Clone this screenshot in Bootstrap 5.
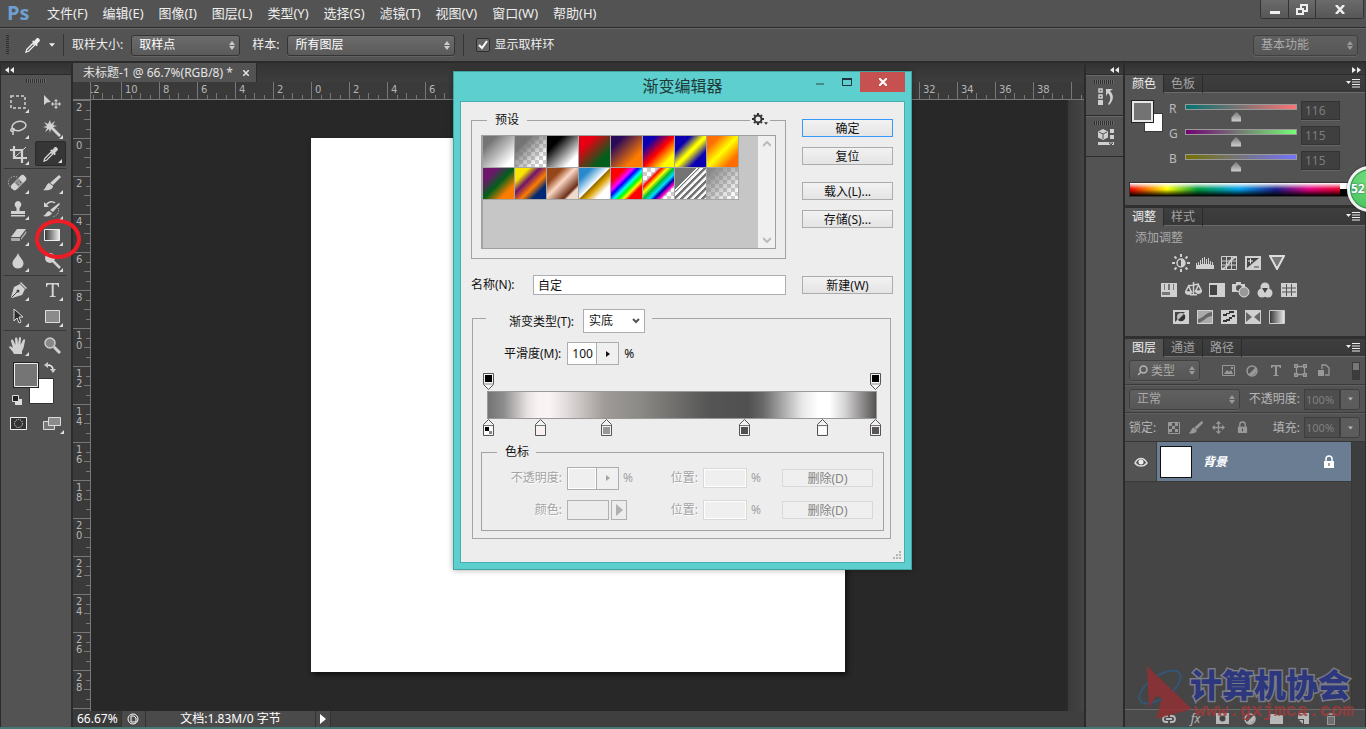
<!DOCTYPE html>
<html lang="zh-CN">
<head>
<meta charset="utf-8">
<meta name="viewport" content="width=device-width, initial-scale=1">
<title>Photoshop - 渐变编辑器</title>
<link rel="stylesheet" href="https://cdn.jsdelivr.net/npm/bootstrap@5.3.0/dist/css/bootstrap.min.css">
<style>
:root{--ps:#535353;--edge:#2b2b2b;--lite:#686868;--ui:"Noto Sans","Noto Sans CJK SC",sans-serif}
body{font:12px/16px var(--ui);color:#eee;background:var(--ps);height:100vh;overflow:hidden}
button,input,select{font:inherit;color:inherit;margin:0}
button{border:0;background:none;padding:0}
a{color:inherit;text-decoration:none}
svg{display:block;fill:currentColor;stroke:none}
.ln{fill:none;stroke:currentColor}
.fit-h{min-height:0}.fit-w{min-width:0}
.menu-bar{height:28px;padding-left:7px;border-bottom:1px solid var(--edge);flex:none}
.logo-ps{font:bold 20px/26px "Open Sans",sans-serif;color:#6f9fd0;width:40px}
.menu-bar a{font-size:13px;line-height:26px;margin-right:15px}
.win-btns{border:1px solid #333;border-top:0;border-radius:0 0 3px 3px;height:19px;margin-right:2px}
.win-btns button{width:27px;height:18px;background:linear-gradient(#6b6b6b,#565656);display:grid;place-items:center}
.win-btns button+button{border-left:1px solid #333}
.win-btns button:last-child{width:48px}
.opt-bar{height:35px;border-top:1px solid var(--lite);border-bottom:2px solid var(--edge);padding:0 8px 0 6px;flex:none}
.vgrip{width:3px;height:20px;background:repeating-linear-gradient(#2f2f2f 0 1px,#535353 1px 2px)}
.hgrip{width:20px;height:4px;background:repeating-linear-gradient(90deg,#2f2f2f 0 1px,#6a6a6a 1px 2px)}
.vline{width:1px;height:22px;background:#353535}
.psel{appearance:none;height:21px;line-height:18px;border:1px solid #343434;border-radius:3px;padding:0 18px 0 7px;color:#fff;
 background:url("data:image/svg+xml,%3Csvg xmlns='http://www.w3.org/2000/svg' width='6' height='9'%3E%3Cpath d='M3 0l3 4H0zM3 9l3-4H0z' fill='%23ccc'/%3E%3C/svg%3E") right 4px center no-repeat,linear-gradient(#6c6c6c,#5a5a5a);box-shadow:0 1px #636363}
.psel.dim{color:#aaa;border-color:#404040;background-color:#5a5a5a;background-image:url("data:image/svg+xml,%3Csvg xmlns='http://www.w3.org/2000/svg' width='6' height='9'%3E%3Cpath d='M3 0l3 4H0zM3 9l3-4H0z' fill='%23999'/%3E%3C/svg%3E"),linear-gradient(#606060,#565656)}
.w-110{width:109px}.w-168{width:168px}.w-105{width:105px}.w-mode{width:111px}
.psel.w-kind{width:71px;padding-left:21px}
.tick{appearance:none;width:14px;height:14px;border:1px solid #2d2d2d;border-radius:2px;background:url("data:image/svg+xml,%3Csvg xmlns='http://www.w3.org/2000/svg' width='12' height='12'%3E%3Cpath d='M2 6l3 3L10 2' fill='none' stroke='%23fff' stroke-width='2'/%3E%3C/svg%3E") center no-repeat,#666}
.strip{height:12px;background:linear-gradient(#323232,#3c3c3c);border-bottom:1px solid var(--edge);flex:none}
/* tool box */
.tools{width:73px;border-left:1px solid var(--edge);border-right:2px solid var(--edge)}
.tool-grid{display:grid;grid-template-columns:34px 34px;padding-top:6px}
.tool{height:26px;position:relative;display:grid;place-items:center;color:#d2d2d2}
.tool.more::after{content:"";position:absolute;right:6px;bottom:2px;border:2px solid transparent;border-right-color:#ddd;border-bottom-color:#ddd}
.tool.on{background:#363636;border:1px solid #2a2a2a;border-radius:2px;margin-right:3px;margin-bottom:1px;height:25px}
.tool.on::after{right:3px}
.tool-grid hr{grid-column:1/3;margin:1px 3px;border:0;border-top:1px solid #383838;opacity:1}
/* document */
.doc-tabs{height:19px;background:linear-gradient(#343434,#3d3d3d);flex:none}
.doc-tab{background:#535353;height:19px;line-height:19px;padding:0 7px 0 10px;border-right:1px solid #2b2b2b;color:#e4e4e4;width:184px;white-space:nowrap}
.h-ruler{height:18px;background:#3a3a3a;border-bottom:1px solid #777;overflow:hidden;flex:none;color:#b4b4b4}
.ruler-corner{width:18px;flex:none;border-right:1px solid #777;background:#3a3a3a;z-index:1;position:relative}
.h-ruler ol,.v-ruler ol{list-style:none;padding:0;margin:0}
.h-ruler ol{margin-left:-8px}
.h-ruler li{width:38px;height:17px;flex:none;padding-left:4px;font:10px/16px "DejaVu Sans",sans-serif;
 background:url("data:image/svg+xml,%3Csvg xmlns='http://www.w3.org/2000/svg' width='38' height='17'%3E%3Cpath d='M.5 0v17M10.5 13v4M19.5 11v6M29.5 13v4' stroke='%23777'/%3E%3C/svg%3E")}
.v-ruler{width:18px;background:#3a3a3a;border-right:1px solid #777;overflow:hidden;flex:none;color:#b4b4b4}
.v-ruler li{height:38px;padding:3px 8px 0 3px;font:10px/10px "DejaVu Sans",sans-serif;word-break:break-all;
 background:url("data:image/svg+xml,%3Csvg xmlns='http://www.w3.org/2000/svg' width='17' height='38'%3E%3Cpath d='M0 .5h17M13 10.5h4M11 19.5h6M13 29.5h4' stroke='%23777'/%3E%3C/svg%3E")}
.pasteboard{background:#282828;overflow:hidden}
.artboard{width:534px;height:534px;margin:38px 0 0 220px;background:#fff;box-shadow:2px 3px 5px #111}
.v-scroll{width:17px;background:linear-gradient(90deg,#3a3a3a,#454545);border-left:1px solid #2b2b2b;flex:none}
.status-bar{height:16px;background:#3f3f3f;flex:none;color:#fff}
.status-bar>*{height:16px;line-height:16px;background:#4a4a4a;border-right:1px solid #333}
.st-zoom{width:49px;background:#3a3a3a!important}.st-doc{width:170px}
/* right side */
.dock{width:41px;border-left:2px solid var(--edge);border-right:2px solid var(--edge)}
.dock-item{height:41px;padding-top:4px;border-bottom:1px solid var(--edge);border-top:1px solid var(--lite);color:#cfcfcf}
.panels{width:241px;border-right:1px solid #2b2b2b}
.panel-tabs{height:18px;background:linear-gradient(#3e3e3e,#383838);border-bottom:1px solid #6a6a6a;flex:none;padding-right:5px}
.panel-tabs a{padding:0 7px;height:18px;line-height:17px;border-right:1px solid #2b2b2b;color:#a2a2a2}
.panel-tabs a.on{background:var(--ps);color:#eee}
.pane{border-bottom:3px solid #303030}
.swatches{width:32px;height:32px;position:relative;flex:none}
.swatches i{position:absolute;right:1px;bottom:1px;width:19px;height:19px;background:#fff;border:1px solid #3a3a3a}
.swatches i+i{left:0;top:0;width:21px;height:21px;background:#747373;border:2px solid #e6e6e6;outline:1px solid #222}
.color-row{padding:8px 0 0 7px;gap:5px}
.chan{height:25px;color:#bbb}
.chan label{width:16px}
.chan input[type=range]{appearance:none;width:112px;height:22px;background:none}
.chan input[type=range]::-webkit-slider-runnable-track{height:6px;border:1px solid #999;background:var(--track);margin-bottom:11px}
.chan input[type=range]::-webkit-slider-thumb{appearance:none;width:10px;height:10px;margin-top:7px;background:linear-gradient(#777,#d4d4d4);clip-path:polygon(50% 0,100% 60%,100% 100%,0 100%,0 60%)}
.t-r{--track:linear-gradient(90deg,#007373,#ff7373)}.t-g{--track:linear-gradient(90deg,#740074,#74ff73)}.t-b{--track:linear-gradient(90deg,#747300,#7473ff)}
.num{width:39px;height:19px;background:#3f3f3f;border:1px solid #333;color:#7c7c7c;padding:0 3px;box-shadow:0 1px #666}
.spectrum{height:15px;margin-top:6px;border:1px solid #333;background:linear-gradient(#fff,#fff0 45%,#0000 50%,#000),linear-gradient(90deg,#e00,#ff0 17%,#00983a 31%,#00a0e9 50%,#1d2088 67%,#e4007f 82%,#e60012)}
.bw-end{width:8px;background:linear-gradient(#fff 50%,#000 50%)}
.adj-title{color:#aaa;padding:4px 0 0 10px}
.adj{padding:3px 32px 6px 0;color:#d0d0d0}
.adj div{height:27px}
.adj button,.kinds button{width:24px;display:grid;place-items:center}
.soft{color:#999}
.lay-row{height:28px;border-bottom:1px solid #3b3b3b;border-top:1px solid #606060;padding:0 5px 0 4px;color:#b5b5b5;flex:none}
.lay-row.last-row{height:29px;border-bottom-color:#353535}
.lay-row .num{width:36px;height:21px;background:#4d4d4d;border-color:#3e3e3e;box-shadow:none;color:#808080;padding:0 1px;font-size:11px}
.dd{width:20px;height:21px;border:1px solid #3e3e3e;border-radius:0 3px 3px 0;background:#5c5c5c;display:grid;place-items:center}
.toggle-f{width:8px;height:18px;background:linear-gradient(#777 45%,#3c3c3c 45%);border:1px solid #3a3a3a}
.layer{height:40px;background:#6b7d93;border-bottom:1px solid #383838;color:#fff}
.eye-col{width:32px;height:39px;background:#535353;border-right:1px solid #3d3d3d;display:grid;place-items:center}
.thumb{width:32px;height:32px;background:#fff;border:1px solid #111;margin:0 11px 0 3px}
.lay-list{background:#454545}.lay-scroll{width:14px;background:#3d3d3d;border-left:1px solid #383838}
.lay-foot{height:18px;border-top:1px solid #6b6b6b;background:#4b4b4b;color:#b8b8b8;padding-left:30px;flex:none}
.lay-foot button{width:27px;display:grid;place-items:center}
.desk-edge{height:2px;background:#467871;flex:none}
.watermark{position:absolute;right:11px;bottom:5px;width:218px;height:56px;opacity:.8;pointer-events:none}
.watermark svg{position:absolute;left:0;top:0}
.wm-cn{position:absolute;left:54px;top:0;font:900 32px/34px "Noto Sans CJK SC",sans-serif;color:#26348c;-webkit-text-stroke:3px #8a8a93;paint-order:stroke fill;white-space:nowrap}
.wm-url{position:absolute;left:58px;top:34px;font:bold 19px/22px "Liberation Mono",monospace;color:#a13a3a;white-space:nowrap}
.ball-clip{position:absolute;right:0;top:0;width:30px;height:240px;overflow:hidden;pointer-events:none}
.ball{position:absolute;right:-27px;top:166px;width:46px;height:46px;border-radius:50%;border:3px solid #f2f2f2;background:radial-gradient(circle at 40% 30%,#6fdc7c,#3db956);box-shadow:inset 0 0 0 1px #37904a,0 0 2px #222;font:bold 12px/40px "Open Sans",sans-serif;color:#fff;padding-left:1px;text-shadow:0 0 2px #155}
/* dialog window */
.dlg{position:absolute;top:71px;left:50%;margin-left:-230px;width:459px;padding:0 6px 6px;background:#5dcfce;border:1px solid #3fa3a1;color:#111;box-shadow:0 0 6px #0005}
.dlg header{height:29px;font:16px/29px var(--ui);position:relative;text-align:center;color:#203a3a}
.dlg-ctl{position:absolute;right:0;top:0;line-height:0}
.dlg-ctl button{height:20px;width:27px;display:grid;place-items:center;color:#234}
.dlg-ctl button:last-child{width:45px;background:#c75050;color:#fff}
.dlg-body{background:#ededed;border:1px solid #46aeb0;padding:9px 11px 23px 10px}
fieldset{border:1px solid #a2a2a2}
legend{float:none;width:auto;margin:0;font:12px/18px var(--ui);height:18px}
.fs-preset{width:315px;height:148px;padding:6px 9px 0;position:relative}
.fs-preset legend{margin-left:6px;padding:0 8px}
.gear{position:absolute;right:15px;top:-16px;background:#ededed;padding:0 2px;color:#333}
.preset-box{height:114px;background:#a9a9a9;border:1px solid #a0a0a0}
.preset-list{background:#c6c6c6;align-content:flex-start;height:112px;padding-right:16px;border-left:1px solid #a6a6a6}
.sw{width:32px;height:32px;border:solid #a6a6a6;border-width:0 1px 1px 0;padding:0}
.p-scroll{width:17px;flex:none;background:#f0f0f0;color:#bbb;padding:5px 0}
.ok-col{padding-top:8px}
.wbtn{height:18px;line-height:17px;border:1px solid #acacac;background:linear-gradient(#f2f2f2,#e4e4e4);width:91px;flex:none;text-align:center}
.ok-col .wbtn+.wbtn{margin-top:10px}.ok-col .wbtn+.wbtn.gap-top{margin-top:17px}
.wbtn.def{border-color:#3399ff}
.wbtn:disabled{border-color:#d8d8d8;background:#efefef;color:#838383}
.tbox{height:20px;border:1px solid #abadb3;background:#fff;padding:0 4px;line-height:18px}
.tbox:disabled{background:#efefef;border-color:#d8d8d8;box-shadow:inset 0 0 0 1px #fff}
.name-lab{width:62px}
.fs-type{margin:14px 2px 0 1px;padding:0 6px 7px 8px;border-color:#a5a5a5}
.fs-type>legend{margin-left:5px;padding:0 7px 0 23px}
.type-line{gap:9px}
.type-line label{line-height:26px}
.wsel{appearance:none;width:62px;height:24px;flex:none;border:1px solid #abadb3;padding:0 5px;background:url("data:image/svg+xml,%3Csvg xmlns='http://www.w3.org/2000/svg' width='8' height='6'%3E%3Cpath d='M1 1l3 3 3-3' fill='none' stroke='%23555' stroke-width='2'/%3E%3C/svg%3E") right 4px center no-repeat,#fff}
.smooth{margin-top:15px;padding-left:23px}.smooth label{margin-right:6px}.smooth span{margin-left:5px}
.spin{height:23px;border:1px solid #abadb3;background:#f0f0f0;width:52px;flex:none}
.spin input{border:0;border-right:1px solid #abadb3;width:29px;padding:0 0 0 4px;background:#fff}
.spin input:disabled{background:#efefef;box-shadow:inset 0 0 0 1px #fff}
.spin button{flex:1;display:grid;place-items:center}
.stops{height:18px;margin:0 7px 0 6px;position:relative}
.stops button{position:absolute;margin-left:-5px;top:0}
.gbar{height:28px;margin:0 7px 0 6px;border:1px solid #999;background:linear-gradient(90deg,#747474,#8d8c8c 4%,#e6e0e0 10%,#faf3f3 13%,#faf3f3 16%,#e4dddd 20%,#a09b99 30%,#8b8a86 39%,#555 57%,#505050 67%,#6a6a6a 71%,#e8e8e8 81%,#fff 85%,#fff 88%,#d5d4d4 92%,#575353)}
.fs-stop{margin-top:6px;padding:0 10px 0 9px;height:88px}
.fs-stop>legend{margin-left:6px;padding:0 7px 0 8px}
.off{color:#a3a3a3}
.off label,.off .lw1{text-align:right;flex:none;text-shadow:1px 1px #fff}
.lw1{width:71px;margin-right:5px}.lw2{margin-right:5px}.pos{width:44px}.pc{width:31px}
.srow{height:24px;margin-top:5px}.srow2{height:20px;margin-top:10px}
.chip{width:42px;height:20px;border:1px solid #b0b0b0;background:#ececec}
.chip2{width:16px;height:20px;border:1px solid #b0b0b0;margin-left:2px;display:grid;place-items:center;color:#b0b0b0}
.sizer{position:absolute;right:9px;bottom:9px;color:#b5b5b5}
.chk{--c:repeating-conic-gradient(#ccc 0 25%,#fff 0 50%) 0 0/8px 8px}
.s1{background:linear-gradient(135deg,#747474 20%,#fff 85%)}
.s2{background:linear-gradient(135deg,#747474 25%,#7470 80%),var(--c)}
.s3{background:linear-gradient(135deg,#000 25%,#fff 80%)}
.s4{background:linear-gradient(135deg,#e60012 25%,#00601b 75%)}
.s5{background:linear-gradient(135deg,#290a59 20%,#ff7c00 75%)}
.s6{background:linear-gradient(135deg,#0a00b2 20%,red 50%,#ff0 80%)}
.s7{background:linear-gradient(135deg,#0a00b2 25%,#ff0 48%,#ff0 52%,#0a00b2 75%)}
.s8{background:linear-gradient(135deg,#ff6e02 20%,#ff0 50%,#ff6d00 80%)}
.s9{background:linear-gradient(135deg,#6f156c 22%,#00601b 50%,#fd7c00 78%)}
.s10{background:linear-gradient(135deg,#f9e600 22%,#6f156c 40%,#fd7c00 60%,#002874 78%)}
.s11{background:linear-gradient(135deg,#97461a 25%,#fbd8c5 46%,#6c2e16 76%,#efdbcd 82%)}
.s12{background:linear-gradient(135deg,#2989cc 20%,#fff 49%,#906a00 51%,#d99f00 60%,#fff 78%)}
.s13{background:linear-gradient(135deg,red 22%,#f0f 36%,#00f 44%,#0ff 54%,#0f0 62%,#ff0 70%,red 78%)}
.s14{background:linear-gradient(135deg,#f000 24%,red 30%,#ff0 40%,#0b3 50%,#0df 60%,#00a 68%,#f0c 76%,#f0c0 81%),var(--c)}
.s15{background:linear-gradient(135deg,#747474 34%,#fff 35%,#fff 37%,#7470 38%),repeating-linear-gradient(135deg,#747474 0 2px,#fffc 3px 5px),var(--c)}
.s16{background:linear-gradient(135deg,#888 10%,#8880 90%),var(--c)}
.ring{position:absolute;left:35px;top:219px;width:46px;height:40px;border:4px solid #ee1c24;border-radius:50%;pointer-events:none}
</style>
</head>
<body class="d-flex flex-column">
<svg width="0" height="0" class="position-absolute" aria-hidden="true">
<symbol id="drop" viewBox="0 0 18 18"><path d="M1 17l1-3 7-7 2 2-7 7z" fill="none" stroke="currentColor" stroke-width="1.4"/><path d="M8 5l1.300-1.300 1 1L13 1.500c1.500-1.500 5 1.500 3.400 3.400L13.500 8l1 1L13 10.500z"/></symbol>
<symbol id="tri" viewBox="0 0 7 4"><path d="M0 0h7L3.500 4z"/></symbol>
<symbol id="rtri" viewBox="0 0 4 6"><path d="M0 0l4 3-4 3z"/></symbol>
<symbol id="pm" viewBox="0 0 14 9"><path d="M0 2h5L2.500 5zM6 0h8v1H6zM6 2.500h8v1H6zM6 5h8v1H6zM6 7.500h8v1H6z"/></symbol>
<symbol id="lock" viewBox="0 0 12 14"><path d="M1 6h10v7H1z"/><path d="M3 6V4a3 3 0 016 0v2" fill="none" stroke="currentColor" stroke-width="1.500"/><path d="M5.500 8h1v3h-1z" fill="#444"/></symbol>
<symbol id="brush" viewBox="0 0 18 16"><path d="M16 0l2 2-8 8-3-2z"/><path d="M6 8l4 3c0 4-6 5-10 4 3-1 3-6 6-7z"/></symbol>
<symbol id="move4" viewBox="0 0 14 14"><path d="M7 0l3 3H7.700v3.300H11V4l3 3-3 3V7.700H7.700V11H10l-3 3-3-3h2.300V7.700H3V10L0 7l3-3v2.300h3.300V3H4z"/></symbol>
<symbol id="ostop" viewBox="0 0 11 17"><path d="M.5.500h10v11l-5 5-5-5z" fill="#f6f6f6" stroke="#555"/><path d="M0 11h11" stroke="#888"/><path d="M2 2h7v7H2z" fill="#000"/></symbol>
<symbol id="cstop" viewBox="0 0 11 17"><path d="M.5 16.500v-11l5-5 5 5v11z" fill="#f3f3f3" stroke="#555"/><path d="M1 6.500h9" stroke="#777"/><path d="M2 8h7v7H2z" fill="currentColor"/></symbol>
<symbol id="fstop" viewBox="0 0 11 17"><path d="M.5 16.500v-11l5-5 5 5v11z" fill="#f3f3f3" stroke="#555"/><path d="M1 6.500h9" stroke="#777"/><path d="M2 8h4v4H2z" fill="#000"/><path d="M6 8h3v4H6zM2 12h4v3H2z" fill="#fff"/><path d="M6 12h3v3H6z" fill="#888"/></symbol>
</svg>

<nav class="menu-bar d-flex">
 <span class="logo-ps">Ps</span>
 <a href="#">文件(F)</a><a href="#">编辑(E)</a><a href="#">图像(I)</a><a href="#">图层(L)</a><a href="#">类型(Y)</a><a href="#">选择(S)</a><a href="#">滤镜(T)</a><a href="#">视图(V)</a><a href="#">窗口(W)</a><a href="#">帮助(H)</a>
 <div class="win-btns d-flex ms-auto">
  <button aria-label="最小化"><svg width="10" height="12"><path d="M0 8h10v3H0z"/></svg></button>
  <button aria-label="还原"><svg width="12" height="11"><path class="ln" stroke-width="2" d="M5 4V1h6v6H8M1 5h6v5H1z"/></svg></button>
  <button aria-label="关闭"><svg width="10" height="9"><path class="ln" stroke-width="2.500" d="M1 0l8 9M9 0L1 9"/></svg></button>
 </div>
</nav>

<div class="opt-bar d-flex align-items-center">
 <div class="vgrip"></div>
 <button class="ms-3 d-flex align-items-center gap-2" aria-label="吸管工具"><svg width="16" height="16"><use href="#drop"/></svg><svg width="6" height="4"><use href="#tri"/></svg></button>
 <div class="vline ms-2"></div>
 <label for="sz" class="ps-2 pe-2">取样大小:</label>
 <select id="sz" class="psel w-110"><option>取样点</option></select>
 <label for="smp" class="ms-2 ps-1 pe-2">样本:</label>
 <select id="smp" class="psel w-168"><option>所有图层</option></select>
 <div class="vline ms-2 me-2"></div>
 <input type="checkbox" class="tick ms-1 me-1" id="rng" checked><label for="rng">显示取样环</label>
 <select class="psel dim w-105 ms-auto" aria-label="工作区"><option>基本功能</option></select>
</div>

<main class="d-flex flex-grow-1 fit-h">
 <aside class="tools d-flex flex-column flex-shrink-0">
  <div class="strip ps-1 pt-1"><svg width="9" height="6"><path d="M4 0v6L0 3zM9 0v6L5 3z"/></svg></div>
  <div class="hgrip mx-auto mt-1"></div>
  <div class="tool-grid">
   <button class="tool more" aria-label="矩形选框"><svg width="16" height="14"><path class="ln" stroke-width="1.500" stroke-dasharray="3 2" d="M1 1h14v12H1z"/></svg></button>
   <button class="tool" aria-label="移动"><svg width="18" height="16"><path d="M1 1l7 7-4 .5L1 11z"/><svg x="8" y="5" width="10" height="10"><use href="#move4"/></svg></svg></button>
   <button class="tool more" aria-label="套索"><svg width="18" height="16"><ellipse class="ln" stroke-width="1.500" cx="10" cy="6" rx="7" ry="4.500" transform="rotate(-12 10 6)"/><path class="ln" stroke-width="1.500" d="M4 8c-3 1-3 4 0 3s1-3-1-2M4 11v4"/></svg></button>
   <button class="tool more" aria-label="魔棒"><svg width="18" height="17"><path d="M7 0l1 4 4-3-2 4 4 1-4 1 8 8-2 2-8-8-1 4-1-4-4 3 2-4-4-1 4-1-3-4 4 2z"/></svg></button>
   <button class="tool more" aria-label="裁剪"><svg width="17" height="17"><path class="ln" stroke-width="2.200" d="M4 0v12h13M0 4h12v13"/><path class="ln" d="M5 11L16 1"/></svg></button>
   <button class="tool more on" aria-label="吸管"><svg width="16" height="16"><use href="#drop"/></svg></button>
   <hr>
   <button class="tool more" aria-label="修复画笔"><svg width="20" height="18"><path class="ln" stroke-dasharray="1 1.500" d="M9 3a5 5 0 10-5 11"/><g transform="rotate(-45 11 9)"><rect x="2" y="5" width="18" height="7" rx="3"/><path d="M8 5h6v7H8z" fill="#999"/><path d="M9 7h1v1H9zM12 7h1v1h-1zM9 9h1v1H9zM12 9h1v1h-1z" fill="#444"/></g></svg></button>
   <button class="tool more" aria-label="画笔"><svg width="18" height="16"><use href="#brush"/></svg></button>
   <button class="tool more" aria-label="仿制图章"><svg width="16" height="16"><path d="M8 0a3.500 3.500 0 013 5L9.500 7v3H15v3H1v-3h5.500V7L5 5a3.500 3.500 0 013-5zM1 14h14v1.500H1z"/></svg></button>
   <button class="tool more" aria-label="历史记录画笔"><svg width="18" height="18"><path d="M16 3l1 1-7 8-3-2zM6 11l3 2c-1 3-5 4-9 3 3-1 3-4 6-5z"/><path class="ln" stroke-width="1.500" d="M3 5c3-4 7-4 9-2"/><path d="M1 2v5h5z"/><path class="ln" stroke-dasharray="1 1.500" d="M15 8c2 4-1 8-6 9"/></svg></button>
   <button class="tool more" aria-label="橡皮擦"><svg width="17" height="14"><path d="M7 1h9l-6 8H1z"/><path d="M1 10h9v3H2c-1 0-1-1-1-3zM11 10l5-7c1 1 0 3-1 4l-4 5z" fill="#aaa"/></svg></button>
   <button class="tool more" aria-label="渐变"><svg width="16" height="12"><defs><linearGradient id="gg"><stop stop-color="#333"/><stop offset="1" stop-color="#eee"/></linearGradient></defs><path d="M.5.500h15v11H.5z" fill="url(#gg)" stroke="#eee"/></svg></button>
   <button class="tool more" aria-label="模糊"><svg width="12" height="16"><path d="M6 0c1 4 6 7 5.500 11C11 14 8.500 15.500 6 15.500S1 14 .5 11C0 7 5 4 6 0z"/></svg></button>
   <button class="tool more" aria-label="减淡"><svg width="17" height="16"><circle cx="6" cy="5" r="5"/><path class="ln" stroke-width="2.500" d="M9 8l7 7"/></svg></button>
   <hr>
   <button class="tool more" aria-label="钢笔"><svg width="17" height="17"><path d="M10 2l5 5-3 6-10 3-1-1L4 5zM11 0l6 6-1 1-6-6z"/><path d="M2 15l5-5" stroke="#444"/><circle cx="8" cy="9" r="1.500" fill="#444"/></svg></button>
   <button class="tool more" aria-label="文字"><svg width="13" height="14"><path d="M0 0h13v4h-1c0-2-1-2.500-3-2.500H7.700V12c0 1 .5 1 2 1.200v.8h-6v-.8c1.500-.2 2-.2 2-1.200V1.500H4C2 1.500 1 2 1 4H0z"/></svg></button>
   <button class="tool more" aria-label="路径选择"><svg width="11" height="16"><path d="M1 1v12l3-3 2 5 2-1-2-5h4z" fill="#2b2b2b" stroke="#ddd"/></svg></button>
   <button class="tool more" aria-label="矩形"><svg width="15" height="13"><path d="M.5.500h14v12H.5z" fill="#8b8b8b" stroke="#ddd"/></svg></button>
   <hr>
   <button class="tool more" aria-label="抓手"><svg width="18" height="17"><path d="M5 17c-1-3-5-6-5-7 1-2 3 0 4 1L2 4c0-2 2-2 2.500 0L6.500 8 6 2c0-2 2-2 2.500 0L9 7l1-6c.5-1.500 2-1 2 .5L11.500 8 14 3c1-1.500 2.500-.5 2 1-1 4-1 7-3 10v3z"/></svg></button>
   <button class="tool" aria-label="缩放"><svg width="17" height="17"><circle cx="6" cy="6" r="5" fill="#888" stroke="#ccc" stroke-width="1.500"/><path class="ln" stroke-width="3" d="M10 10l6 6"/></svg></button>
  </div>
  <svg width="62" height="76" class="mt-1 ms-2" aria-label="前景色和背景色"><path d="M20.500 16.500h24v25h-24z" fill="#fff" stroke="#333"/><path d="M4 0h26v26H4z" fill="#222"/><path d="M5.500 1.500h23v23h-23z" fill="#757575" stroke="#eee"/><path d="M38 3c4 0 6 2 6 5" class="ln" stroke="#ccc" stroke-width="1.500"/><path d="M39 0v6l-4-3zM41 7h6l-3 4z" fill="#ccc"/><path d="M6 37h7v6H6z" fill="#ddd"/><path d="M3.500 33.500h6v6h-6z" fill="#222" stroke="#ddd"/><path d="M1.500 55.500h16v12h-16z" fill="#333" stroke="#eee"/><circle cx="9.500" cy="61.500" r="4" class="ln" stroke="#eee" stroke-dasharray="1 1"/><path d="M34.500 59.500h11v8h-11z" fill="#777" stroke="#ddd"/><path d="M39.500 55.500h12v8h-12z" fill="#8b8b8b" stroke="#ddd"/><path d="M55 68v4h-4z" fill="#ddd"/></svg>
 </aside>

 <section class="d-flex flex-column flex-grow-1 fit-w">
  <div class="doc-tabs"><div class="doc-tab d-flex justify-content-between align-items-center"><span>未标题-1 @ 66.7%(RGB/8) *</span><button aria-label="关闭文档"><svg width="6" height="6"><path class="ln" stroke-width="1.500" d="M0 0l6 6M6 0L0 6"/></svg></button></div></div>
  <div class="h-ruler d-flex"><div class="ruler-corner"></div><ol class="d-flex" id="hr"></ol></div>
  <div class="d-flex flex-grow-1 fit-h">
   <div class="v-ruler"><ol id="vr"></ol></div>
   <div class="pasteboard flex-grow-1"><div class="artboard"></div></div>
   <div class="v-scroll"></div>
  </div>
  <div class="status-bar d-flex">
   <span class="ps-1 st-zoom">66.67%</span>
   <button class="px-1" aria-label="状态"><svg width="15" height="12"><circle cx="7" cy="6" r="5" class="ln" stroke="#aaa"/><path d="M5 3h3l2 2v4H5z" class="ln" stroke="#aaa"/></svg></button>
   <span class="text-center st-doc">文档:1.83M/0 字节</span>
   <button class="px-1" aria-label="更多"><svg width="6" height="10"><path d="M0 0l6 5-6 5z"/></svg></button>
  </div>
 </section>

 <aside class="dock flex-shrink-0">
  <div class="strip pt-1 d-flex justify-content-end pe-1"><svg width="9" height="6"><path d="M4 0v6L0 3zM9 0v6L5 3z"/></svg></div>
  <div class="dock-item"><div class="hgrip ms-2"></div><button class="ms-2 mt-1 ps-1" aria-label="历史记录"><svg width="17" height="18"><path class="ln" stroke-width="1.500" d="M1 1h3v3H1zM1 7h3v3H1z"/><path d="M0 12h5v5H0zM8 1h7l-3 2c4 4 4 9-1 14l-1-1c3-4 3-8 0-11L8 8z"/></svg></button></div>
  <div class="dock-item"><div class="hgrip ms-2"></div><button class="ms-2 mt-1 ps-1" aria-label="属性"><svg width="17" height="18"><path d="M5 0l5 2.500v6L5 11 0 8.500v-6zM12 0h4v4h-4zM12 6h4v4h-4zM0 13h16v3H0z"/><path d="M1 3l4 2 4-2M5 5v5M11 14h4l-2 2z" fill="none" stroke="#555"/></svg></button></div>
 </aside>

 <aside class="panels d-flex flex-column flex-shrink-0 position-relative">
  <div class="strip pt-1 d-flex justify-content-end pe-1"><svg width="9" height="6"><path d="M0 0v6l4-3zM5 0v6l4-3z"/></svg></div>
  <section class="pane">
   <div class="panel-tabs d-flex"><a href="#" class="on">颜色</a><a href="#">色板</a><button class="ms-auto" aria-label="面板菜单"><svg width="14" height="9"><use href="#pm"/></svg></button></div>
   <div class="d-flex color-row"><div class="swatches"><i></i><i></i></div>
    <div class="flex-grow-1">
     <div class="chan d-flex align-items-start"><label for="cr">R</label><input type="range" id="cr" max="255" value="116" class="t-r me-1"><input class="num" value="116" aria-label="R 值"></div>
     <div class="chan d-flex align-items-start"><label for="cg">G</label><input type="range" id="cg" max="255" value="115" class="t-g me-1"><input class="num" value="115" aria-label="G 值"></div>
     <div class="chan d-flex align-items-start"><label for="cb">B</label><input type="range" id="cb" max="255" value="115" class="t-b me-1"><input class="num" value="115" aria-label="B 值"></div>
    </div></div>
   <div class="ps-1 pe-3 pb-2"><div class="spectrum d-flex justify-content-end"><div class="bw-end"></div></div></div>
  </section>
  <section class="pane">
   <div class="panel-tabs d-flex"><a href="#" class="on">调整</a><a href="#">样式</a><button class="ms-auto" aria-label="面板菜单"><svg width="14" height="9"><use href="#pm"/></svg></button></div>
   <div class="adj-title">添加调整</div>
   <div class="adj">
    <div class="d-flex justify-content-center">
     <button aria-label="亮度/对比度"><svg width="18" height="18"><circle cx="9" cy="9" r="4" class="ln" stroke-width="1.500"/><path d="M9 5a4 4 0 010 8z"/><path class="ln" stroke-width="2" d="M9 0v3M9 15v3M0 9h3M15 9h3M2.500 2.500l2 2M13.500 13.500l2 2M15.500 2.500l-2 2M4.500 13.500l-2 2"/></svg></button>
     <button aria-label="色阶"><svg width="18" height="12"><path d="M0 12V6h1v2h1V5h1v3h1V3h1v4h1V1h1v6h1V0h1v7h1V2h1v5h1V1h1v6h1V4h1v4h1V5h1v3h1v4z"/></svg></button>
     <button aria-label="曲线"><svg width="16" height="14"><path class="ln" d="M.5.500h15v13H.5zM5.500 0v14M10.500 0v14M0 5h16M0 9h16"/><path class="ln" stroke-width="1.800" d="M0 13c9 0 7-12 16-12"/></svg></button>
     <button aria-label="曝光度"><svg width="16" height="14"><path d="M0 0h16v14H0z"/><path d="M2 12L14 2H2z" fill="#444"/><path d="M3 5h5M5.500 2.500v5" stroke="#eee"/><path d="M9 11h5" stroke="#444"/></svg></button>
     <button aria-label="自然饱和度"><svg width="16" height="15"><path d="M1 1h14L8 14z" fill="#777" stroke="#ddd" stroke-width="2"/></svg></button>
    </div>
    <div class="d-flex justify-content-center">
     <button aria-label="色相/饱和度"><svg width="16" height="14"><path d="M0 0h16v14H0z"/><path d="M3 1h1v6H3zM7 1h2v6H7zM12 1h1v6h-1zM1 9h8v3H1z" fill="#777"/></svg></button>
     <button aria-label="色彩平衡"><svg width="17" height="15"><path class="ln" stroke-width="1.500" d="M8.500 0v12M3 4l11-2M3.500 4l-3 6h6zM13.500 3l-3 6h6z"/><path d="M0 10h7c0 4-7 4-7 0zM10 9h7c0 4-7 4-7 0zM5 12h7v1.500H5z"/></svg></button>
     <button aria-label="黑白"><svg width="16" height="14"><path d="M0 0h16v14H0z"/><path d="M1 2h7v10H1z" fill="#444"/></svg></button>
     <button aria-label="照片滤镜"><svg width="18" height="16"><path d="M0 2h4V0h5v2h4v8H0z"/><circle cx="7" cy="6" r="3" fill="#555"/><circle cx="12" cy="10" r="5" fill="#999" stroke="#ddd"/></svg></button>
     <button aria-label="通道混合器"><svg width="16" height="16"><circle cx="8" cy="5" r="4.500"/><circle cx="5" cy="11" r="4.500"/><circle cx="11" cy="11" r="4.500"/><path d="M5 6h6L8 11z" fill="#444"/></svg></button>
     <button aria-label="颜色查找"><svg width="16" height="14"><path d="M0 0h16v14H0z"/><path d="M5.500 1v12M10.500 1v12M1 5h14M1 9h14" stroke="#555"/></svg></button>
    </div>
    <div class="d-flex justify-content-center">
     <button aria-label="反相"><svg width="16" height="14"><path d="M0 0h16v14H0z"/><path d="M2 2h10L2 12z" fill="#444"/><circle cx="8" cy="7" r="4" fill="#bbb"/><path d="M5 10a4 4 0 006-6z" fill="#333"/></svg></button>
     <button aria-label="色调分离"><svg width="16" height="14"><path d="M0 0h16v14H0z" fill="#aaa"/><path d="M0 9c7 0 6-6 16-7v4c-8 0-8 6-16 7z" fill="#666"/><path class="ln" d="M.5.500h15v13H.5z"/></svg></button>
     <button aria-label="阈值"><svg width="16" height="14"><path d="M0 0h16v14H0z"/><path d="M2 12v-2h3V9h3V7h3V5h3v2h-3v2H9v2H6v1zM2 6V4h3V3h3V1h5v2H9v1H6v2z" fill="#333"/></svg></button>
     <button aria-label="可选颜色"><svg width="16" height="14"><path d="M0 0h16v14H0z"/><path d="M1 2l6 5-6 5zM15 2L9 7l6 5z" fill="#666"/></svg></button>
     <button aria-label="渐变映射"><svg width="16" height="14"><path d="M.5.500h15v13H.5z" fill="url(#gg)" stroke="#ccc"/></svg></button>
    </div>
   </div>
  </section>
  <section class="d-flex flex-column flex-grow-1">
   <div class="panel-tabs d-flex"><a href="#" class="on">图层</a><a href="#">通道</a><a href="#">路径</a><button class="ms-auto" aria-label="面板菜单"><svg width="14" height="9"><use href="#pm"/></svg></button></div>
   <div class="lay-row d-flex align-items-center border-top-0">
    <select class="psel dim w-kind" aria-label="图层过滤"><option>类型</option></select>
    <svg width="11" height="11" class="position-absolute ms-2"><circle cx="6.500" cy="4.500" r="3.500" class="ln" stroke-width="1.500"/><path class="ln" stroke-width="1.500" d="M4 7l-3 3"/></svg>
    <div class="kinds d-flex ms-3 soft">
     <button aria-label="像素"><svg width="13" height="11"><path d="M.5.500h12v10H.5z" class="ln"/><path d="M2 9l3-4 2 2 2-2 2 4zM9 2h2v2H9z"/></svg></button>
     <button aria-label="调整"><svg width="12" height="12"><circle cx="6" cy="6" r="5" class="ln" stroke-width="1.500"/><path d="M10 2a6 6 0 01-8 8z"/></svg></button>
     <button aria-label="文字"><svg width="10" height="11"><path d="M0 0h10v3H9L8 1.500H6V10h1.500v1h-5v-1H4V1.500H2L1 3H0z"/></svg></button>
     <button aria-label="形状"><svg width="13" height="13"><path class="ln" stroke-width="1.300" d="M2.500 2.500h8v8h-8z"/><path d="M0 0h4v4H0zM9 0h4v4H9zM0 9h4v4H0zM9 9h4v4H9z"/><path d="M1.500 1.500h1v1h-1zM10.500 1.500h1v1h-1zM1.500 10.500h1v1h-1zM10.500 10.500h1v1h-1z" fill="#444"/></svg></button>
     <button aria-label="智能对象"><svg width="12" height="13"><path class="ln" stroke-width="1.300" d="M4 5V1h4l3 3v7H7"/><path d="M0 6h6v6H0z"/></svg></button>
    </div>
    <button class="toggle-f ms-auto" aria-label="过滤开关"></button>
   </div>
   <div class="lay-row d-flex align-items-center">
    <select class="psel dim w-mode" aria-label="混合模式"><option>正常</option></select>
    <label for="op" class="ms-auto pe-1">不透明度:</label><input class="num" id="op" value="100%"><button class="dd" aria-label="选择不透明度"><svg width="5" height="4"><use href="#tri"/></svg></button>
   </div>
   <div class="lay-row last-row d-flex align-items-center">
    <span>锁定:</span>
    <div class="d-flex gap-2 ms-2 ps-1 soft">
     <button aria-label="锁定透明像素"><svg width="12" height="12"><path class="ln" d="M.5.500h11v11H.5z"/><path d="M1 1h3v3H1zM7 1h3v3H7zM4 4h3v3H4zM1 7h3v3H1zM7 7h3v3H7z"/></svg></button>
     <button aria-label="锁定图像像素"><svg width="16" height="13"><use href="#brush"/></svg></button>
     <button aria-label="锁定位置"><svg width="13" height="13"><use href="#move4"/></svg></button>
     <button class="ms-1" aria-label="锁定全部"><svg width="11" height="13"><use href="#lock"/></svg></button>
    </div>
    <label for="fl" class="ms-auto pe-1">填充:</label><input class="num" id="fl" value="100%"><button class="dd" aria-label="选择填充"><svg width="5" height="4"><use href="#tri"/></svg></button>
   </div>
   <div class="lay-list d-flex flex-grow-1">
    <div class="flex-grow-1"><div class="layer d-flex align-items-center"><button class="eye-col" aria-label="可见性"><svg width="14" height="10"><path d="M1 6c3-6 9-6 12 0-3 4-9 4-12 0z" fill="none" stroke="#ddd" stroke-width="1.500"/><circle cx="7" cy="5" r="2.500" fill="#eee"/></svg></button><div class="thumb"></div><b class="fst-italic">背景</b><svg width="12" height="14" class="ms-auto me-3"><use href="#lock"/></svg></div></div>
    <div class="lay-scroll"></div>
   </div>
   <div class="lay-foot d-flex">
    <button aria-label="链接"><svg width="14" height="8"><path class="ln" stroke-width="1.800" d="M6 1H4a3 3 0 000 6h2M8 1h2a3 3 0 010 6H8M4 4h6"/></svg></button>
    <button aria-label="图层样式" class="fst-italic">fx</button>
    <button aria-label="蒙版"><svg width="13" height="11"><path d="M0 0h13v11H0z"/><circle cx="6.500" cy="5.500" r="3" fill="#444"/></svg></button>
    <button aria-label="调整图层"><svg width="12" height="12"><circle cx="6" cy="6" r="5" class="ln" stroke-width="1.500"/><path d="M10 2a6 6 0 01-8 8z"/></svg></button>
    <button aria-label="新建组"><svg width="13" height="10"><path d="M0 0h6l1 1h6v9H0z"/></svg></button>
    <button aria-label="新建图层"><svg width="11" height="11"><path d="M0 0h11v11H6V6H0z"/><path d="M1 7h4v4z"/></svg></button>
    <button aria-label="删除"><svg width="10" height="12"><path d="M0 1h3V0h4v1h3v1H0zM1 3h8v9H1z" fill="#999"/><path d="M3 4v7M5 4v7M7 4v7" stroke="#444"/></svg></button>
   </div>
  </section>
  <div class="watermark"><svg width="62" height="56"><ellipse cx="24" cy="21" rx="24" ry="11" transform="rotate(-35 24 21)" fill="none" stroke="#2f5b84" stroke-width="2"/><path d="M11 0l45 43-36-13-7 12zM26 32l30 11-36 10z" fill="#962f33"/></svg><div class="wm-cn">计算机协会</div><div class="wm-url">www.gxjmca.com</div></div>
 </aside>
</main>
<div class="desk-edge"></div>
<div class="ring"></div>
<div class="ball-clip"><div class="ball">52</div></div>

<div class="dlg" role="dialog" aria-label="渐变编辑器">
 <header>渐变编辑器
  <div class="dlg-ctl d-flex"><button aria-label="最小化"><svg width="8" height="6"><path d="M0 4h8v2H0z" fill="#47898b"/></svg></button><button aria-label="最大化"><svg width="10" height="8"><path class="ln" d="M.5 1h9v6.500h-9z"/><path d="M0 0h10v2H0z"/></svg></button><button aria-label="关闭"><svg width="8" height="8"><path class="ln" stroke-width="2" d="M0 0l8 8M8 0L0 8"/></svg></button></div>
 </header>
 <div class="dlg-body">
  <div class="d-flex gap-3">
   <fieldset class="fs-preset"><legend>预设</legend>
    <button class="gear d-flex align-items-end" aria-label="预设菜单"><svg width="12" height="12"><circle cx="6" cy="6" r="3.500" class="ln" stroke-width="2"/><path class="ln" stroke-width="2" d="M6 0v2M6 10v2M0 6h2M10 6h2M2 2l1 1M9 9l1 1M10 2L9 3M3 9l-1 1"/></svg><svg width="4" height="3"><use href="#tri"/></svg></button>
    <div class="preset-box d-flex">
     <div class="preset-list d-flex flex-wrap flex-grow-1" id="presets"></div>
     <div class="p-scroll d-flex flex-column justify-content-between align-items-center"><svg width="8" height="6"><path class="ln" stroke-width="2" d="M0 5l4-4 4 4"/></svg><svg width="8" height="6"><path class="ln" stroke-width="2" d="M0 1l4 4 4-4"/></svg></div>
    </div>
   </fieldset>
   <div class="ok-col d-flex flex-column"><button class="wbtn def">确定</button><button class="wbtn">复位</button><button class="wbtn gap-top">载入(L)...</button><button class="wbtn">存储(S)...</button></div>
  </div>
  <div class="d-flex align-items-center mt-3"><label for="nm" class="name-lab">名称(N):</label><input id="nm" class="tbox flex-grow-1 me-3" value="自定"><button class="wbtn">新建(W)</button></div>
  <fieldset class="fs-type">
   <legend><span class="d-flex align-items-start type-line"><label for="tp">渐变类型(T):</label><select id="tp" class="wsel"><option>实底</option></select></span></legend>
   <div class="d-flex align-items-center smooth"><label for="sm">平滑度(M):</label><div class="spin d-flex"><input id="sm" value="100"><button aria-label="平滑度滑块"><svg width="4" height="6"><use href="#rtri"/></svg></button></div><span>%</span></div>
   <div class="stops mt-2" id="ops"></div>
   <div class="gbar"></div>
   <div class="stops" id="cls"></div>
   <fieldset class="fs-stop"><legend>色标</legend>
    <div class="d-flex align-items-center off srow"><label for="a1" class="lw1">不透明度:</label><div class="spin d-flex"><input id="a1" disabled><button aria-label="不透明度滑块" disabled><svg width="4" height="6"><use href="#rtri"/></svg></button></div><span class="ms-1">%</span><label for="a2" class="lw2 ms-auto">位置:</label><input id="a2" class="tbox pos" disabled><span class="ms-1 pc">%</span><button class="wbtn" disabled>删除(D)</button></div>
    <div class="d-flex align-items-center off srow2"><span class="lw1">颜色:</span><button class="chip" aria-label="颜色" disabled></button><button class="chip2" aria-label="选择颜色" disabled><svg width="7" height="12"><path d="M0 0l7 6-7 6z"/></svg></button><label for="a3" class="lw2 ms-auto">位置:</label><input id="a3" class="tbox pos" disabled><span class="ms-1 pc">%</span><button class="wbtn" disabled>删除(D)</button></div>
   </fieldset>
  </fieldset>
 </div>
 <svg class="sizer" width="9" height="9"><path d="M6 0h2v2H6zM3 3h2v2H3zM6 3h2v2H6zM0 6h2v2H0zM3 6h2v2H3zM6 6h2v2H6z"/></svg>
</div>
<script>
const $=id=>document.getElementById(id);
for(let i=-12;i<=38;i+=2)$('hr').insertAdjacentHTML('beforeend','<li>'+Math.abs(i)+'</li>');
for(let i=-2;i<=28;i+=2)$('vr').insertAdjacentHTML('beforeend','<li>'+Math.abs(i)+'</li>');
$('hr').insertAdjacentHTML('beforeend','<li></li>');
$('vr').insertAdjacentHTML('beforeend','<li></li>');
for(let i=1;i<=16;i++)$('presets').insertAdjacentHTML('beforeend',`<button class="sw chk s${i}" aria-label="预设 ${i}"></button>`);
[0.3,99.6].forEach(p=>$('ops').insertAdjacentHTML('beforeend',`<button style="left:${p}%" aria-label="不透明度色标"><svg width="11" height="17"><use href="#ostop"/></svg></button>`));
[[0.3,'#111','fstop'],[13.6,'#faf0f0'],[30.5,'#9b9795'],[66,'#505050'],[86,'#fff'],[99.6,'#5a5656']].forEach(([p,c,s='cstop'])=>$('cls').insertAdjacentHTML('beforeend',`<button style="left:${p}%;color:${c}" aria-label="颜色色标"><svg width="11" height="17"><use href="#${s}"/></svg></button>`));
</script>
<script src="https://cdn.jsdelivr.net/npm/bootstrap@5.3.0/dist/js/bootstrap.bundle.min.js"></script>
</body>
</html>
